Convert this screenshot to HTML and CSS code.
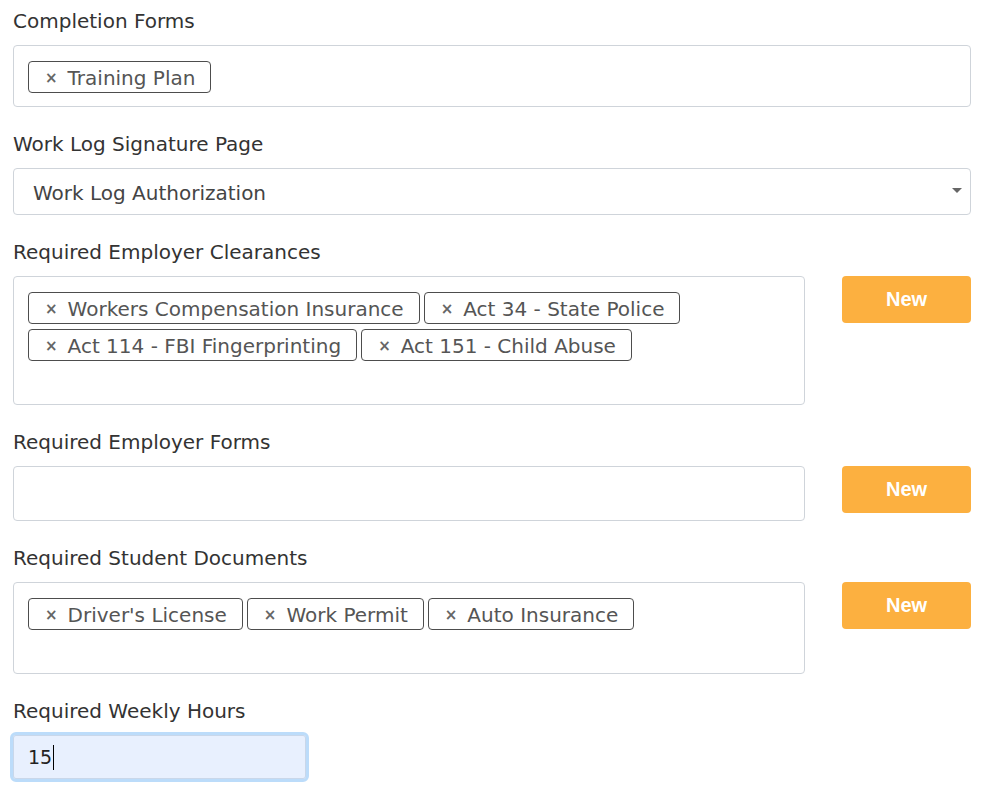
FILE: index.html
```html
<!DOCTYPE html>
<html lang="en">
<head>
<meta charset="utf-8">
<title>Placement Settings</title>
<link rel="stylesheet" href="styles.css">
</head>
<body>
<form class="form">
  <div class="field">
    <label class="label">Completion Forms</label>
    <div class="tagbox">
      <span class="tag"><span class="x">×</span>Training Plan</span>
    </div>
  </div>

  <div class="field">
    <label class="label">Work Log Signature Page</label>
    <div class="select">
      <span class="select-text">Work Log Authorization</span>
      <span class="caret-down"></span>
    </div>
  </div>

  <div class="field">
    <label class="label">Required Employer Clearances</label>
    <div class="row">
      <div class="tagbox">
        <span class="tag"><span class="x">×</span>Workers Compensation Insurance</span>
        <span class="tag"><span class="x">×</span>Act 34 - State Police</span>
        <span class="tag"><span class="x">×</span>Act 114 - FBI Fingerprinting</span>
        <span class="tag"><span class="x">×</span>Act 151 - Child Abuse</span>
        <span class="search"></span>
      </div>
      <button type="button" class="btn-new">New</button>
    </div>
  </div>

  <div class="field">
    <label class="label">Required Employer Forms</label>
    <div class="row">
      <div class="tagbox tagbox-empty">
        <span class="search"></span>
      </div>
      <button type="button" class="btn-new">New</button>
    </div>
  </div>

  <div class="field">
    <label class="label">Required Student Documents</label>
    <div class="row">
      <div class="tagbox">
        <span class="tag"><span class="x">×</span>Driver's License</span>
        <span class="tag"><span class="x">×</span>Work Permit</span>
        <span class="tag"><span class="x">×</span>Auto Insurance</span>
        <span class="search"></span>
      </div>
      <button type="button" class="btn-new">New</button>
    </div>
  </div>

  <div class="field">
    <label class="label">Required Weekly Hours</label>
    <div class="input-focus">
      <span class="input-value">15</span><span class="text-caret"></span>
    </div>
  </div>
</form>
</body>
</html>
```

FILE: styles.css
```css
* {
  box-sizing: border-box;
}

body {
  margin: 0;
  background: #ffffff;
  font-family: "DejaVu Sans", "Open Sans", sans-serif;
  color: #333333;
}

.form {
  padding: 7px 12px 0 13px;
}

.field {
  margin-bottom: 23px;
}

.label {
  display: block;
  font-size: 20px;
  line-height: 27px;
  color: #333333;
  margin-bottom: 11px;
  padding-top: 1px;
  height: 27px;
}

.row {
  display: grid;
  grid-template-columns: 792px 129px;
  column-gap: 37px;
  align-items: start;
}

.tagbox {
  display: flex;
  flex-wrap: wrap;
  gap: 5px 4px;
  align-content: flex-start;
  border: 1px solid #cfd4da;
  border-radius: 4px;
  padding: 15px 14px 13px 14px;
  background: #ffffff;
}

.tagbox-empty {
  min-height: 55px;
}

.tag {
  display: inline-flex;
  align-items: center;
  height: 32px;
  padding: 1px 15px 0 16px;
  border: 1px solid #4d4d4d;
  border-radius: 4px;
  font-size: 20px;
  color: #555555;
  white-space: nowrap;
}

.tag .x {
  font-size: 15px;
  font-weight: 700;
  color: #666666;
  margin-right: 10px;
}

.search {
  flex-basis: 100%;
  height: 25px;
}

.select {
  display: flex;
  align-items: center;
  justify-content: space-between;
  height: 47px;
  border: 1px solid #cfd4da;
  border-radius: 4px;
  padding: 3px 8px 0 19px;
  font-size: 20px;
  color: #444444;
}

.caret-down {
  width: 0;
  height: 0;
  border-left: 5px solid transparent;
  border-right: 5px solid transparent;
  border-top: 5px solid #666666;
  margin-top: -6px;
}

.btn-new {
  height: 47px;
  border: none;
  border-radius: 4px;
  background: #fcb040;
  color: #ffffff;
  font-family: "Liberation Sans", Arial, sans-serif;
  font-weight: 700;
  font-size: 20px;
  padding: 0;
  margin-top: 0;
}

.input-focus {
  display: flex;
  align-items: center;
  width: 299px;
  height: 50px;
  margin-left: -3px;
  margin-top: -3px;
  border: 3px solid #bcdcfa;
  border-radius: 6px;
  background: #e8f0fe;
  padding-left: 15px;
  font-size: 19px;
  color: #222222;
  box-shadow: inset 0 0 0 1px #c9d7ea;
}

.text-caret {
  display: inline-block;
  width: 1px;
  height: 25px;
  background: #000000;
  margin-left: 1px;
}
```
